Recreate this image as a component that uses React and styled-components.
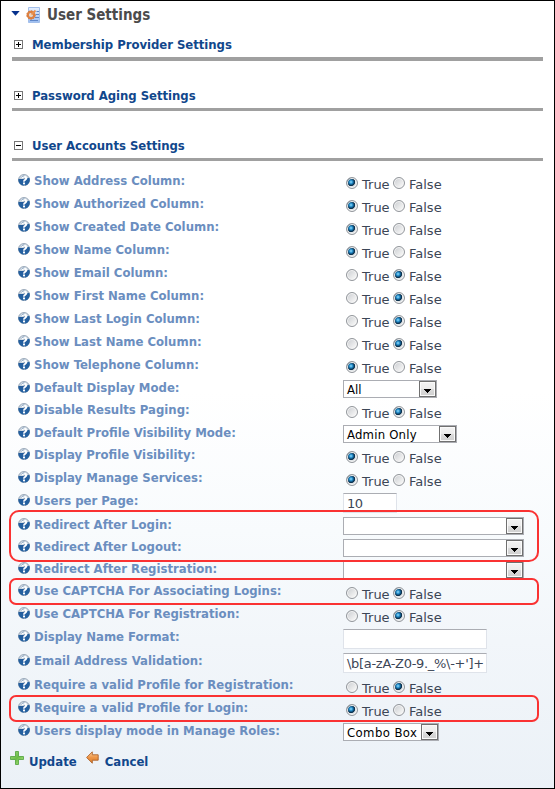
import React from "react";
import styled, { createGlobalStyle, css } from "styled-components";

const GlobalStyle = createGlobalStyle`
  * { box-sizing: border-box; }
  body { margin: 0; background: #fff; }
`;

const narrow = css`
  font-family: "DejaVu Sans Condensed", "DejaVu Sans", sans-serif;
  font-stretch: condensed;
`;

const Panel = styled.main`
  position: relative;
  display: flex;
  flex-direction: column;
  width: 555px;
  height: 789px;
  padding: 0 11px 0 8px;
  border: 1px solid #000;
  background: linear-gradient(#fff 0, #fff 390px, #f8fbfd 530px, #f2f6fa 640px, #ebf1f7 787px);
  overflow: hidden;
`;

const TitleBar = styled.header`
  display: flex;
  align-items: center;
  height: 28px;
  padding-left: 2px;
`;

const CaretSlot = styled.span`
  display: flex;
  padding-bottom: 3px;
`;

const SettingsIconSlot = styled.span`
  display: flex;
  margin-left: 6px;
  padding-bottom: 1px;
`;

const Title = styled.h1`
  ${narrow}
  margin: 0 0 0 6px;
  font-size: 15px;
  line-height: 20px;
  color: #4b4b4b;
`;

const SectionHeader = styled.section`
  display: flex;
  align-items: center;
  height: 32px;
  margin: 0 0 ${(p) => p.$gap}px 3px;
  padding: ${(p) => p.$pad}px 0 0 2px;
  border-bottom: ${(p) => p.$rule}px solid #a0a0a0;
`;

const SectionTitle = styled.h2`
  ${narrow}
  margin: 0 0 0 9px;
  padding-top: 1px;
  font-size: 13px;
  line-height: 16px;
  letter-spacing: -0.04px;
  color: #11478c;
`;

const Form = styled.div`
  display: flex;
  flex-direction: column;
  padding-left: 9px;
`;

const Row = styled.div`
  display: grid;
  grid-template-columns: 325px 1fr;
  height: ${(p) => p.$height}px;
`;

const Label = styled.label`
  ${narrow}
  display: flex;
  align-items: flex-start;
  gap: 4px;
  padding-top: 2px;
  font-size: 13px;
  font-weight: 700;
  line-height: 16px;
  white-space: nowrap;
  color: #6b8ebf;
  & > svg { margin-top: 1px; }
`;

const Control = styled.div`
  display: flex;
  align-items: flex-start;
  padding-top: 2px;
`;

const Choice = styled.div`
  display: flex;
  align-items: center;
  gap: 4px;
  width: 47px;
  height: 20px;
  font: 13px/20px "DejaVu Sans", sans-serif;
  color: #3c4656;
`;

const Choices = styled.div`
  display: flex;
  padding-left: 3px;
`;

const ChoiceText = styled.span`
  padding-top: 4px;
`;

const Radio = styled.span`
  flex: none;
  width: 12px;
  height: 12px;
  border: 1px solid #92969b;
  border-radius: 50%;
  box-shadow: inset 0 0 0 1px #f6f6f6;
  background: ${(p) =>
    p.$on
      ? "radial-gradient(circle at 4px 4px, #9be0fb 0, #2b93cf 1.6px, #0b466f 3px, #0a2c47 3.7px, #dfe3e6 4.5px)"
      : "linear-gradient(135deg, #c9ccd0, #f4f4f4 80%)"};
`;

const SelectBox = styled.div`
  ${narrow}
  display: flex;
  justify-content: space-between;
  width: ${(p) => p.$width}px;
  height: 18px;
  border: 1px solid #abadb3;
  background: #fff;
  font-size: 13px;
  line-height: 17px;
  letter-spacing: ${(p) => p.$spacing || 0}px;
  padding-left: 3px;
  white-space: nowrap;
  color: #000;
`;

const SelectButton = styled.span`
  display: flex;
  justify-content: center;
  align-items: flex-end;
  flex: none;
  width: 17px;
  height: 16px;
  padding-bottom: 3px;
  border: 1px solid #707070;
  background: linear-gradient(#f3f3f3, #ececec 48%, #dcdcdc 50%, #cfcfcf);
  box-shadow: inset 0 0 0 1px #fafafa;
`;

const TextBox = styled.div`
  width: ${(p) => p.$width}px;
  height: 20px;
  padding-left: 3px;
  border: 1px solid #dfe3ea;
  border-top-color: #abadb3;
  background: #fff;
  overflow: hidden;
  font: 13px/20px "DejaVu Sans", sans-serif;
  letter-spacing: ${(p) => p.$spacing || 0}px;
  white-space: nowrap;
  color: #3c4656;
`;

const Actions = styled.footer`
  display: flex;
  padding: 6px 0 0 1px;
`;

const Action = styled.div`
  ${narrow}
  display: flex;
  align-items: flex-start;
  gap: ${(p) => p.$gap}px;
  margin-right: 9px;
  font-size: 13px;
  font-weight: 700;
  line-height: 18px;
  color: #11478c;
  & > svg { margin-top: 1px; }
  & > span { padding-top: 3px; }
`;

const Highlight = styled.div`
  position: absolute;
  left: 8px;
  top: ${(p) => p.$top - 1}px;
  width: 530px;
  height: ${(p) => p.$height}px;
  border: 2px solid #fa3232;
  border-radius: ${(p) => p.$radius}px;
  pointer-events: none;
`;

const HelpIcon = () => (
  <svg width="12" height="12" viewBox="0 0 12 12">
    <defs>
      <linearGradient id="help" x1="0" y1="0" x2="0" y2="1">
        <stop offset="0" stopColor="#e6ebf0" />
        <stop offset=".4" stopColor="#c3cfdb" />
        <stop offset=".42" stopColor="#1f5596" />
        <stop offset="1" stopColor="#3674b8" />
      </linearGradient>
    </defs>
    <circle cx="6" cy="6" r="5.500" fill="url(#help)" stroke="#8496aa" strokeWidth=".8" />
    <path d="M.5 5Q2 6 3.500 5L4.500 8 6 11.500A5.600 5.600 0 0 1 .5 5ZM8.500 4.500 11.300 3.800A5.600 5.600 0 0 1 7 11.500Z" fill="#24609f" />
    <path d="M3.600 4.300Q4 2.600 6 2.600T8.300 4.300Q8.300 5.200 7.100 5.800T6 7.600" fill="none" stroke="#fff" strokeWidth="1.900" />
    <path d="M3.300 3.600Q4.300 1.700 6.400 1.800M6.400 4.200Q6.600 5 5.300 5.600" fill="none" stroke="#5279a3" strokeWidth=".7" />
    <rect x="5" y="8.500" width="2" height="1.800" fill="#fff" />
  </svg>
);

const SettingsIcon = () => (
  <svg width="15" height="16" viewBox="0 0 15 16">
    <defs>
      <linearGradient id="sheet" x1="0" y1="0" x2="0" y2="1">
        <stop offset="0" stopColor="#e8f1ff" />
        <stop offset="1" stopColor="#9cbdf0" />
      </linearGradient>
    </defs>
    <path d="M2.500.5h11v15h-11z" fill="url(#sheet)" stroke="#a3bfea" />
    <path d="M10.500 4.500H13M10 7.500h3M9 10.500h4M4 13.500h8" stroke="#5f87c8" />
    <circle cx="5" cy="8" r="3.200" fill="none" stroke="#df8140" strokeWidth="2.200" />
    <circle cx="5" cy="8" r="4.300" fill="none" stroke="#d0702e" strokeWidth=".8" strokeDasharray="1.600 1.200" />
    <circle cx="5" cy="8" r="1.500" fill="#f8d5b0" />
    <path d="M5.500 7.500l4-4" stroke="#e9914e" strokeWidth="1.800" />
  </svg>
);

const Caret = () => (
  <svg width="9" height="5" viewBox="0 0 9 5">
    <path d="M.3 0h8.400L4.500 4.800z" fill="#06318d" />
  </svg>
);

const Expander = ({ open }) => (
  <svg width="9" height="9" viewBox="0 0 9 9" shapeRendering="crispEdges">
    <path d="M.5.5h8v8h-8z" fill="#fff" stroke="#777" />
    <path d={open ? "M2 4.500h5" : "M2 4.500h5M4.500 2v5"} stroke="#000" />
  </svg>
);

const DownArrow = () => (
  <svg width="7" height="4" viewBox="0 0 7 4" shapeRendering="crispEdges">
    <path d="M0 0h7v1H6v1H5v1H4v1H3V3H2V2H1V1H0z" fill="#000" />
  </svg>
);

const PlusIcon = () => (
  <svg width="14" height="14" viewBox="0 0 14 14">
    <defs>
      <linearGradient id="plus" x1="0" y1="0" x2="1" y2="1">
        <stop offset="0" stopColor="#a5dc85" />
        <stop offset=".5" stopColor="#6abc45" />
        <stop offset="1" stopColor="#b8ea8c" />
      </linearGradient>
    </defs>
    <path d="M5.500.5h3v5h5v3h-5v5h-3v-5h-5v-3h5z" fill="url(#plus)" stroke="#4ea23a" strokeWidth=".8" />
  </svg>
);

const BackIcon = () => (
  <svg width="13" height="13" viewBox="0 0 13 13">
    <defs>
      <linearGradient id="back" x1="0" y1="0" x2="0" y2="1">
        <stop offset="0" stopColor="#ffd3a0" />
        <stop offset=".5" stopColor="#ee9647" />
        <stop offset="1" stopColor="#dd7c2a" />
      </linearGradient>
    </defs>
    <path d="M.6 6.500 6.300.8v3h5.900v5.400H6.300v3z" fill="url(#back)" stroke="#ad622a" strokeWidth=".9" />
  </svg>
);

const Bool = ({ value }) => (
  <Choices>
    <Choice><Radio $on={value} /><ChoiceText>True</ChoiceText></Choice>
    <Choice><Radio $on={!value} /><ChoiceText>False</ChoiceText></Choice>
  </Choices>
);

const Select = ({ width, spacing, children }) => (
  <SelectBox $width={width} $spacing={spacing}>
    <span>{children}</span>
    <SelectButton><DownArrow /></SelectButton>
  </SelectBox>
);

const yes = <Bool value />;
const no = <Bool value={false} />;

const settings = [
  ["Show Address Column:", 23, yes],
  ["Show Authorized Column:", 23, yes],
  ["Show Created Date Column:", 23, yes],
  ["Show Name Column:", 23, yes],
  ["Show Email Column:", 23, no],
  ["Show First Name Column:", 23, no],
  ["Show Last Login Column:", 23, no],
  ["Show Last Name Column:", 23, no],
  ["Show Telephone Column:", 23, yes],
  ["Default Display Mode:", 22, <Select width={94}>All</Select>],
  ["Disable Results Paging:", 23, no],
  ["Default Profile Visibility Mode:", 22, <Select width={114} spacing={0.2}>Admin Only</Select>],
  ["Display Profile Visibility:", 23, yes],
  ["Display Manage Services:", 23, yes],
  ["Users per Page:", 24, <TextBox $width={54} $spacing={-0.5}>10</TextBox>],
  ["Redirect After Login:", 22, <Select width={181} />],
  ["Redirect After Logout:", 22, <Select width={181} />],
  ["Redirect After Registration:", 22, <Select width={181} />],
  ["Use CAPTCHA For Associating Logins:", 23, no],
  ["Use CAPTCHA For Registration:", 23, no],
  ["Display Name Format:", 24, <TextBox $width={144} />],
  ["Email Address Validation:", 24, <TextBox $width={144} $spacing={-0.3}>{"\\b[a-zA-Z0-9._%\\-+']+"}</TextBox>],
  ["Require a valid Profile for Registration:", 23, no],
  ["Require a valid Profile for Login:", 23, yes],
  ["Users display mode in Manage Roles:", 23, <Select width={96} spacing={0.4}>Combo Box</Select>],
];

export default function App() {
  return (
    <>
      <GlobalStyle />
      <Panel>
        <TitleBar>
          <CaretSlot><Caret /></CaretSlot>
          <SettingsIconSlot><SettingsIcon /></SettingsIconSlot>
          <Title>User Settings</Title>
        </TitleBar>
        <SectionHeader $pad={2} $rule={4} $gap={18}>
          <Expander /><SectionTitle>Membership Provider Settings</SectionTitle>
        </SectionHeader>
        <SectionHeader $pad={3} $rule={3} $gap={18}>
          <Expander /><SectionTitle>Password Aging Settings</SectionTitle>
        </SectionHeader>
        <SectionHeader $pad={3} $rule={3} $gap={10}>
          <Expander open /><SectionTitle>User Accounts Settings</SectionTitle>
        </SectionHeader>
        <Form>
          {settings.map(([name, height, control]) => (
            <Row key={name} $height={height}>
              <Label><HelpIcon />{name}</Label>
              <Control>{control}</Control>
            </Row>
          ))}
        </Form>
        <Actions>
          <Action $gap={5}><PlusIcon /><span>Update</span></Action>
          <Action $gap={6}><BackIcon /><span>Cancel</span></Action>
        </Actions>
        <Highlight $top={510} $height={52} $radius={10} />
        <Highlight $top={578} $height={27} $radius={7} />
        <Highlight $top={695} $height={27} $radius={7} />
      </Panel>
    </>
  );
}
